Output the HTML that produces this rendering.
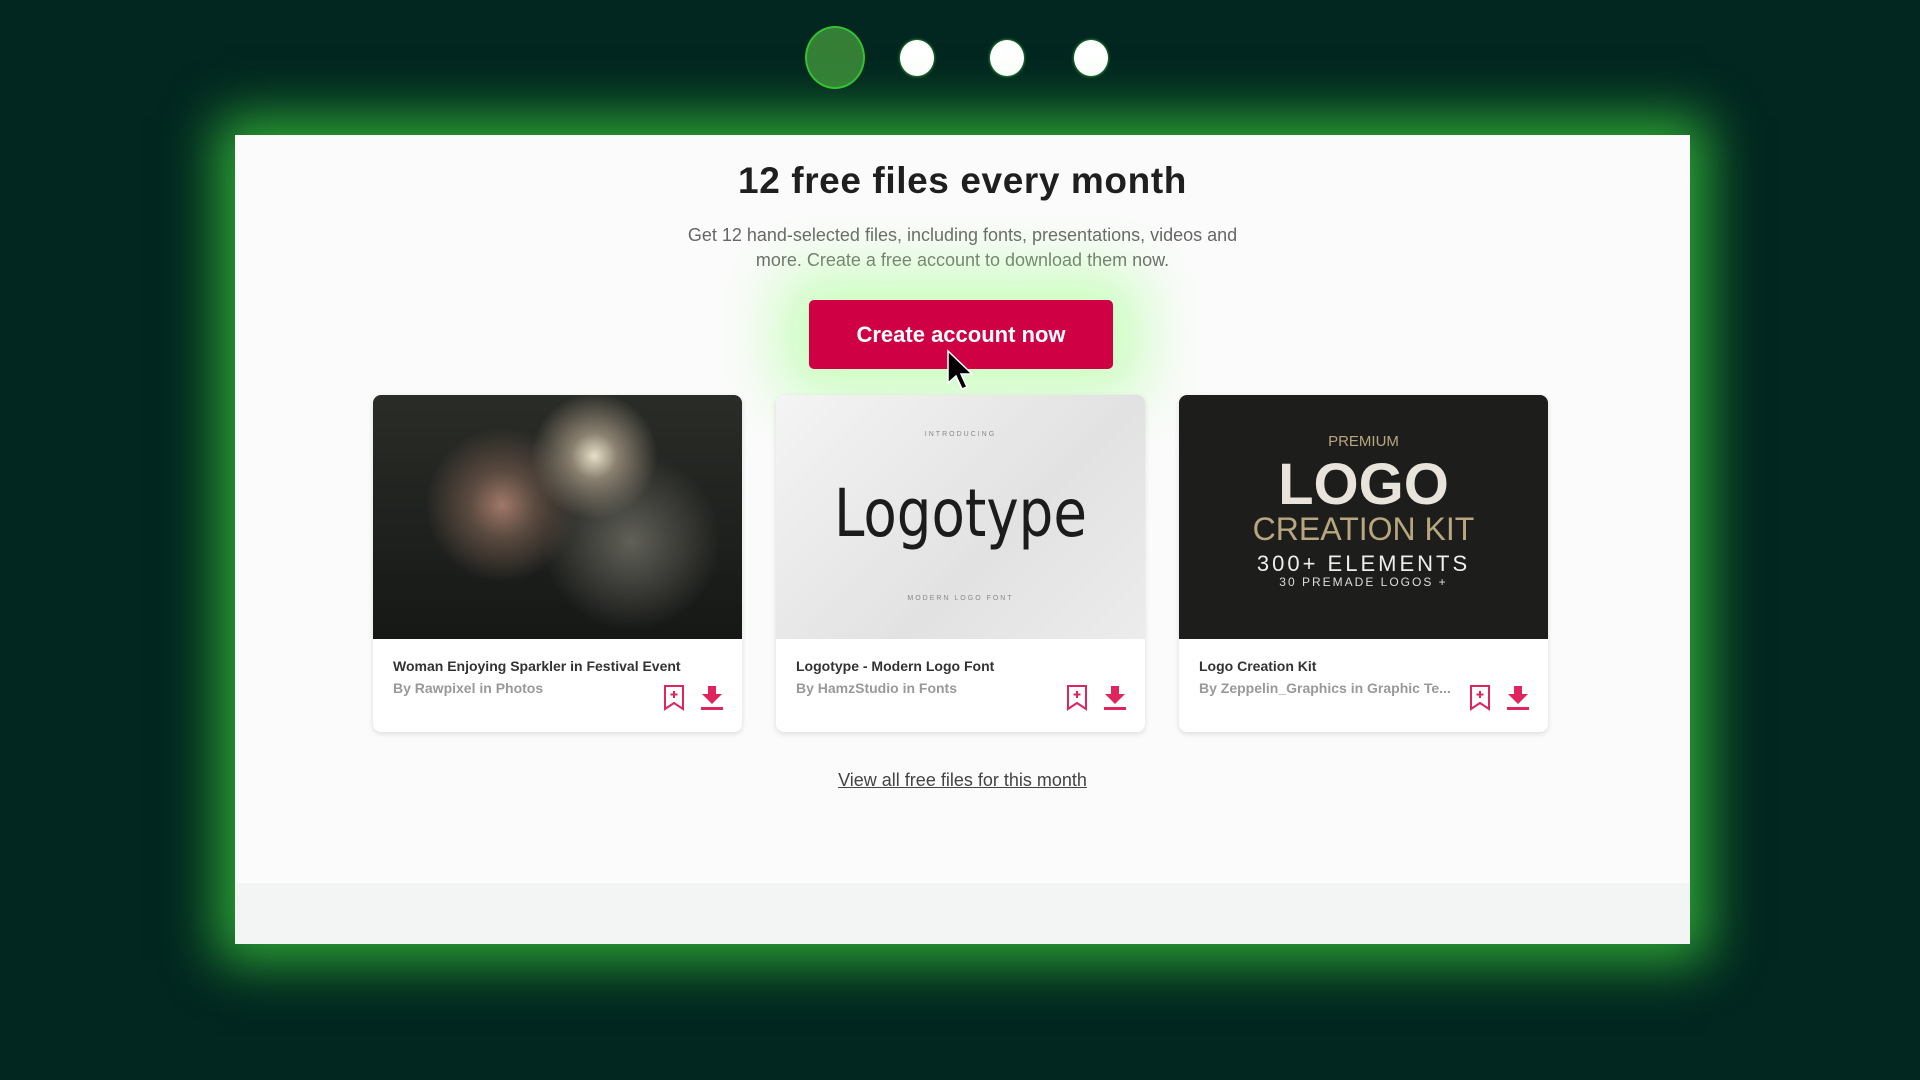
<!DOCTYPE html>
<html><head><meta charset="utf-8"><style>
*{margin:0;padding:0;box-sizing:border-box}
body{width:1920px;height:1080px;overflow:hidden;background:#022620;font-family:"Liberation Sans",sans-serif;position:relative}
.dot{position:absolute;border-radius:50%}
.panel{position:absolute;left:235px;top:135px;width:1455px;height:809px;background:#fbfbfb;box-shadow:0 0 50px 18px rgba(60,210,60,.75)}
.foot{position:absolute;left:0;right:0;bottom:0;height:61px;background:#f3f4f4}
h1{position:absolute;width:100%;text-align:center;font-size:37px;font-weight:bold;color:#1f1f1f;left:0;letter-spacing:0.6px}
.sub{position:absolute;width:100%;left:0;text-align:center;font-size:18px;line-height:25px;color:#666}
.btn{position:absolute;left:574px;top:165px;width:304px;height:69px;background:#cf0044;border-radius:5px;color:#fff;font-size:22px;font-weight:bold;text-align:center;line-height:69px;box-shadow:0 0 60px 30px rgba(170,255,150,.6)}
.card{position:absolute;top:260px;width:369px;height:337px;background:#fff;border-radius:8px;box-shadow:0 2px 6px rgba(0,0,0,.12);overflow:hidden}
.img{height:244px}
.t{position:absolute;left:20px;top:263px;font-size:14px;font-weight:bold;color:#333}
.b{position:absolute;left:20px;top:285px;font-size:14px;font-weight:bold;color:#999}
.ic{position:absolute;top:290px}
.link{position:absolute;top:635px;width:100%;left:0;text-align:center;font-size:18px;color:#444;text-decoration:underline}
</style></head><body>
<div class="dot" style="left:805px;top:26px;width:60px;height:63px;background:#357e37;border:2px solid #33c233"></div>
<div class="dot" style="left:900px;top:40px;width:34px;height:36px;background:#fff;box-shadow:0 0 3px #4c4"></div>
<div class="dot" style="left:990px;top:40px;width:34px;height:36px;background:#fff;box-shadow:0 0 3px #4c4"></div>
<div class="dot" style="left:1074px;top:40px;width:34px;height:36px;background:#fff;box-shadow:0 0 3px #4c4"></div>
<div class="panel">
<div class="foot"></div>
<h1 style="top:25px">12 free files every month</h1>
<div class="sub" style="top:88px">Get 12 hand-selected files, including fonts, presentations, videos and<br>more. Create a free account to download them now.</div>
<div class="btn">Create account now</div>
<svg style="position:absolute;left:711px;top:214px" width="30" height="46" viewBox="0 0 30 46"><path d="M2 2 L2 34 L10 27 L16 40 L21 38 L15 25 L26 25 Z" fill="#000" stroke="#fff" stroke-width="1.5"/></svg>

<div class="card" style="left:138px"><div class="img" style="background:radial-gradient(circle at 60% 25%,#e8e0c8 0,#8a8070 8%,transparent 22%),radial-gradient(circle at 35% 45%,#a07868 0,#5a4a40 12%,transparent 28%),radial-gradient(circle at 70% 60%,#606058 0,transparent 30%),linear-gradient(180deg,#2a2c28,#161816)"></div>
<div class="t">Woman Enjoying Sparkler in Festival Event</div><div class="b">By Rawpixel in Photos</div>
<svg class="ic" style="left:290px" width="22" height="26" viewBox="0 0 22 26"><path d="M2 1H20V24L11 18L2 24Z M11 6V13 M7.5 9.5H14.5" fill="none" stroke="#e0245e" stroke-width="2"/></svg>
<svg class="ic" style="left:327px" width="24" height="26" viewBox="0 0 24 26"><path d="M8 1H16V9H22L12 19L2 9H8Z" fill="#e0245e"/><rect x="1" y="22" width="22" height="3" fill="#e0245e"/></svg></div>

<div class="card" style="left:541px"><div class="img" style="background:linear-gradient(135deg,#f4f4f4,#e2e2e2 60%,#ececec);position:relative"><div style="position:absolute;top:80px;width:100%;text-align:center;font-size:66px;color:#1c1c1c;font-family:'DejaVu Sans Condensed','Liberation Sans Narrow',sans-serif;transform:scaleX(.92)">Logotype</div><div style="position:absolute;top:36px;width:100%;text-align:center;font-size:7px;color:#888;letter-spacing:2px">INTRODUCING</div><div style="position:absolute;top:200px;width:100%;text-align:center;font-size:7px;color:#888;letter-spacing:2px">MODERN LOGO FONT</div></div>
<div class="t">Logotype - Modern Logo Font</div><div class="b">By HamzStudio in Fonts</div>
<svg class="ic" style="left:290px" width="22" height="26" viewBox="0 0 22 26"><path d="M2 1H20V24L11 18L2 24Z M11 6V13 M7.5 9.5H14.5" fill="none" stroke="#e0245e" stroke-width="2"/></svg>
<svg class="ic" style="left:327px" width="24" height="26" viewBox="0 0 24 26"><path d="M8 1H16V9H22L12 19L2 9H8Z" fill="#e0245e"/><rect x="1" y="22" width="22" height="3" fill="#e0245e"/></svg></div>

<div class="card" style="left:944px"><div class="img" style="background:#1d1d1b;position:relative;color:#d8cfb8;text-align:center"><div style="position:absolute;top:38px;width:100%;font-size:15px;color:#b8a680">PREMIUM</div><div style="position:absolute;top:56px;width:100%;font-size:58px;font-weight:bold;color:#e8e4dc">LOGO</div><div style="position:absolute;top:116px;width:100%;font-size:32px;color:#b8a680">CREATION KIT</div><div style="position:absolute;top:156px;width:100%;font-size:22px;letter-spacing:3px;color:#eee">300+ ELEMENTS</div><div style="position:absolute;top:180px;width:100%;font-size:12px;letter-spacing:2px;color:#ddd">30 PREMADE LOGOS +</div></div>
<div class="t">Logo Creation Kit</div><div class="b">By Zeppelin_Graphics in Graphic Te...</div>
<svg class="ic" style="left:290px" width="22" height="26" viewBox="0 0 22 26"><path d="M2 1H20V24L11 18L2 24Z M11 6V13 M7.5 9.5H14.5" fill="none" stroke="#e0245e" stroke-width="2"/></svg>
<svg class="ic" style="left:327px" width="24" height="26" viewBox="0 0 24 26"><path d="M8 1H16V9H22L12 19L2 9H8Z" fill="#e0245e"/><rect x="1" y="22" width="22" height="3" fill="#e0245e"/></svg></div>

<div class="link">View all free files for this month</div>
</div>
</body></html>
